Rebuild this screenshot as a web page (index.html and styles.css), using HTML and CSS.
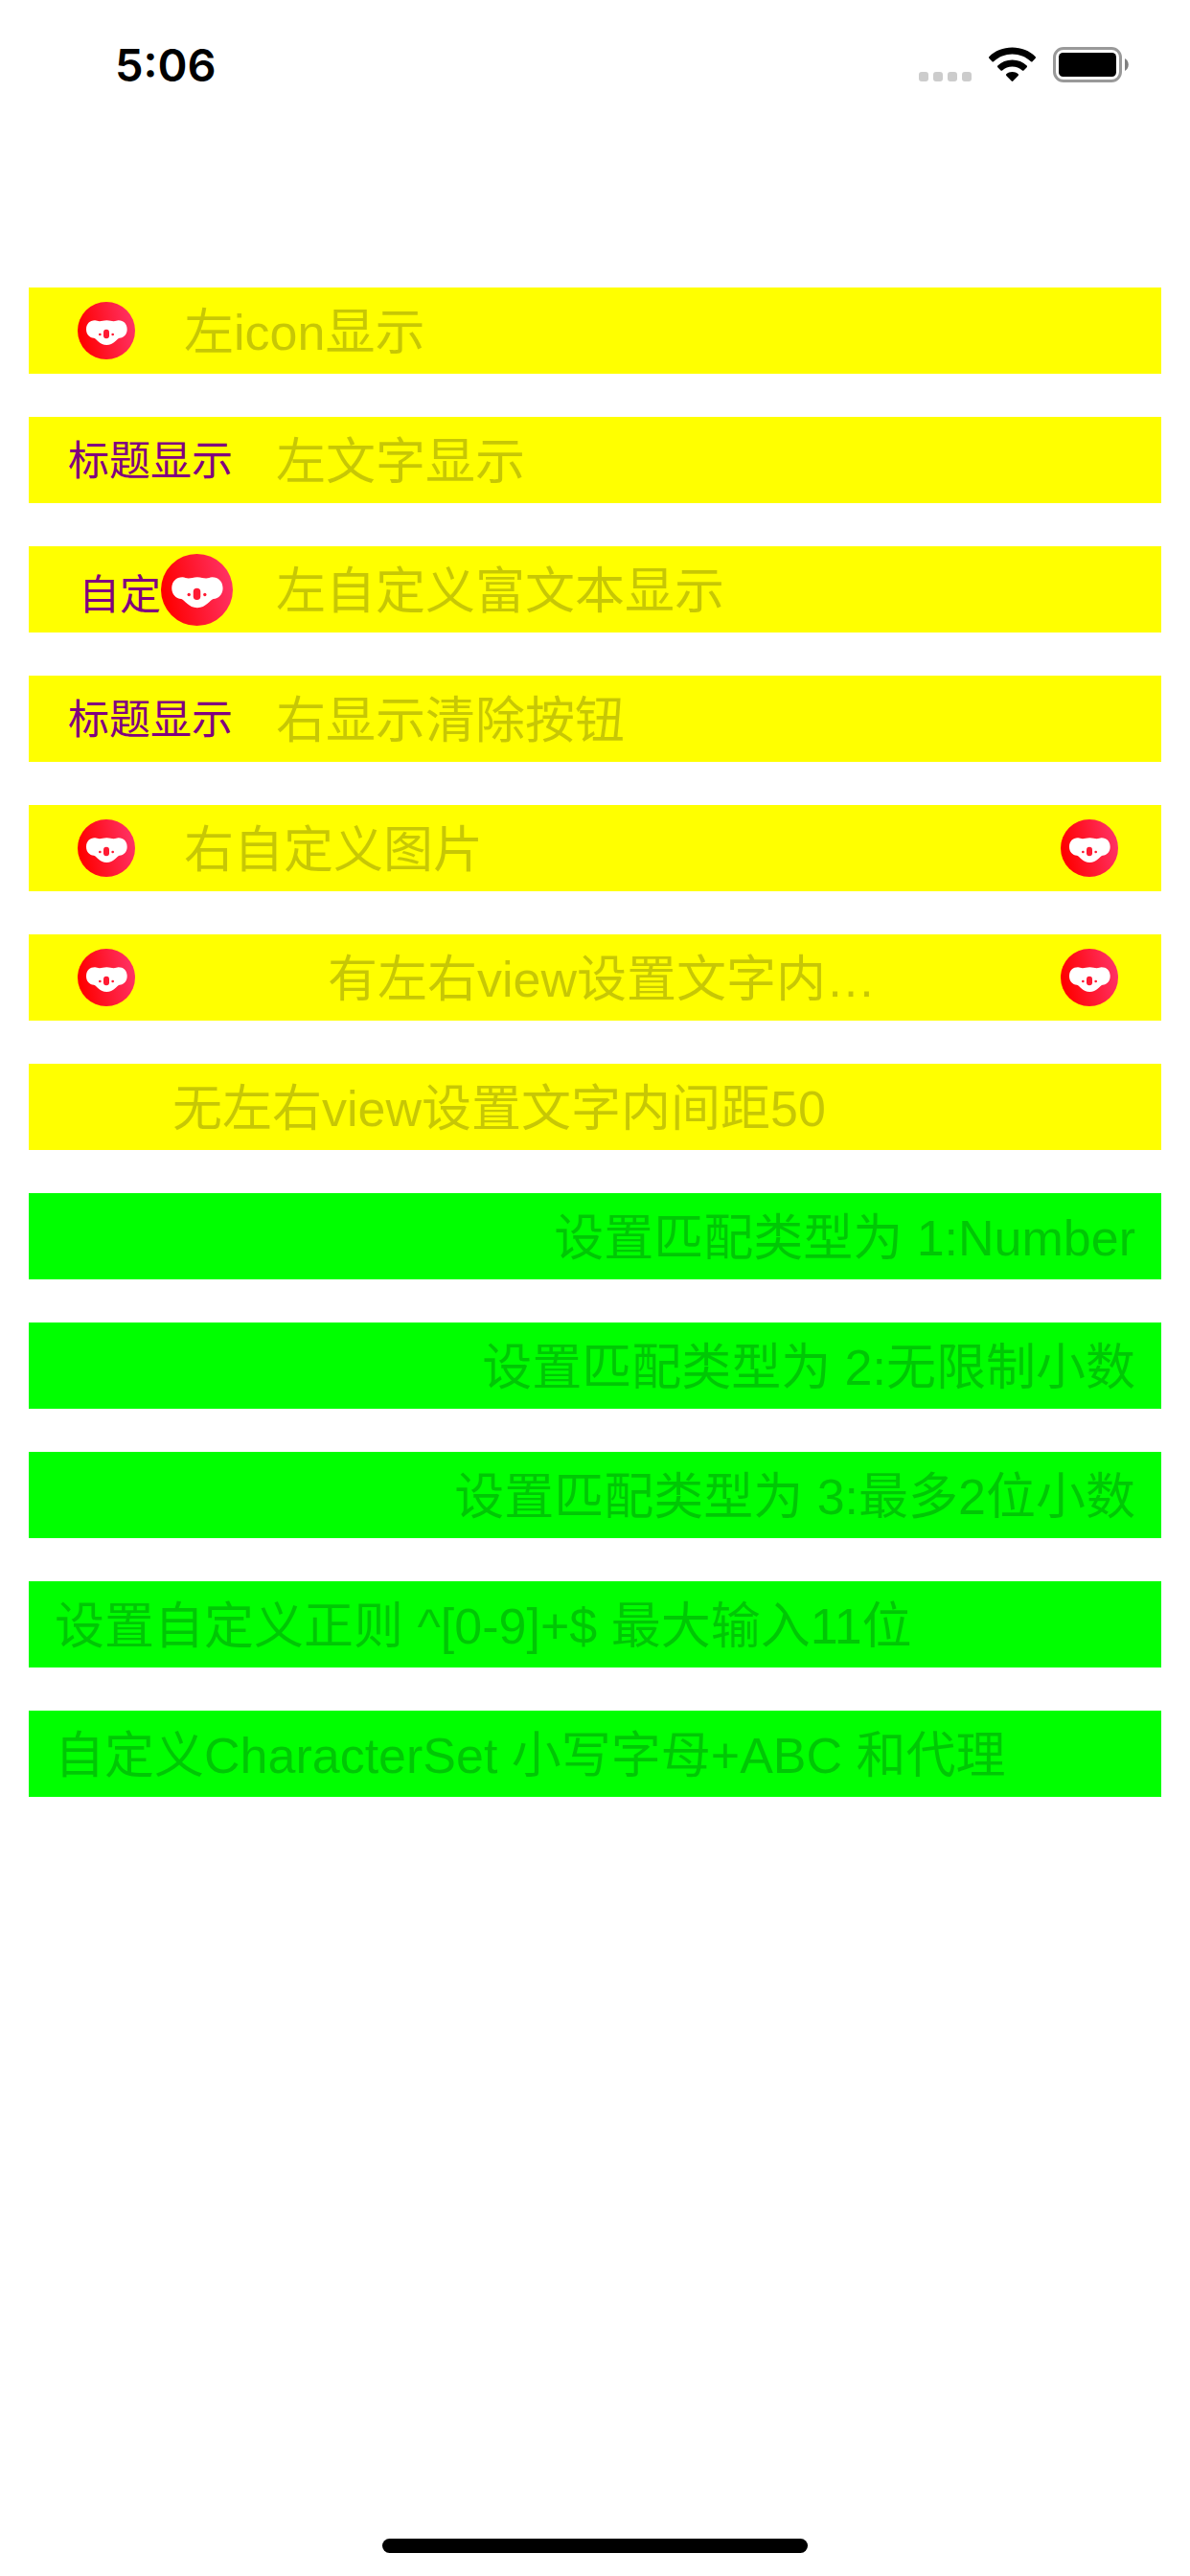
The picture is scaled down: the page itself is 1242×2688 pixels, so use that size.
FILE: index.html
```html
<!DOCTYPE html>
<html lang="zh-CN">
<head>
<meta charset="utf-8">
<meta name="viewport" content="width=device-width">
<title>TextField</title>
<link rel="stylesheet" href="styles.css">
</head>
<body>
<svg class="defs" width="0" height="0" aria-hidden="true">
  <defs>
    <linearGradient id="badge" x1="0" y1="0.6" x2="1" y2="0.4">
      <stop offset="0.05" stop-color="#ff0000"/>
      <stop offset="1" stop-color="#ff3366"/>
    </linearGradient>
    <symbol id="koala" viewBox="0 0 180 180">
      <circle cx="90" cy="90" r="90" fill="url(#badge)"/>
      <path fill="#fff" d="M27 86C27 69 38 58 54 58C60 58 63 61 69 61C76 61 81 58 91 58C101 58 106 61 113 61C119 61 122 58 128 58C144 58 155 69 155 86C155 101 145 112 131 113C122 116 113 135 91 135C69 135 60 116 51 113C37 112 27 101 27 86Z"/>
      <rect x="81" y="86" width="18" height="29" rx="9" fill="#ff1a33"/>
      <circle cx="70" cy="102" r="4" fill="#ff1a33"/>
      <circle cx="110" cy="102" r="4" fill="#ff1a33"/>
    </symbol>
  </defs>
</svg>
<div class="screen">
  <header class="status">
    <time class="clock">5:06</time>
    <div class="indicators">
      <div class="signal"><span></span><span></span><span></span><span></span></div>
      <svg class="wifi" viewBox="0 0 49 36" aria-hidden="true">
        <path d="M24.500 0C34 0 42.500 3.500 48.500 9.500Q49.500 10.500 48.500 11.500L45.500 14.700Q44.800 15.400 44 14.700C38.500 9.800 32 7 24.500 7S10.500 9.800 5 14.700Q4.200 15.400 3.500 14.700L.5 11.500Q-.5 10.500 .5 9.500C6.500 3.500 15 0 24.500 0Z"/>
        <path d="M24.500 13C30.500 13 35.700 15.300 39.700 19Q40.500 19.800 39.700 20.700L36.500 23.900Q35.700 24.700 34.900 24C32 21.400 28.500 20 24.500 20S17 21.400 14.100 24Q13.300 24.700 12.500 23.900L9.300 20.700Q8.500 19.800 9.300 19C13.300 15.300 18.500 13 24.500 13Z"/>
        <path d="M24.500 25.500C27 25.500 29 26.300 30.700 27.700Q31.500 28.500 30.700 29.400L25.300 35Q24.500 35.800 23.700 35L18.300 29.400Q17.500 28.500 18.300 27.700C20 26.300 22 25.500 24.500 25.500Z"/>
      </svg>
      <svg class="battery" viewBox="0 0 79 37" aria-hidden="true">
        <rect x="1.500" y="1.500" width="69" height="34" rx="9.500" fill="none" stroke="#999" stroke-width="3"/>
        <rect x="6" y="6" width="60" height="25" rx="4.500"/>
        <path d="M75 12C80 14.500 80 22.500 75 25Z" fill="#808080"/>
      </svg>
    </div>
  </header>

  <main class="fields">
    <div class="field icon-left">
      <svg class="icon"><use href="#koala"/></svg>
      <input type="text" aria-label="左icon显示" placeholder="左icon显示">
    </div>
    <div class="field text-left">
      <label for="title">标题显示</label>
      <input id="title" type="text" placeholder="左文字显示">
    </div>
    <div class="field text-left">
      <label class="rich" for="rich">自定<svg class="icon large"><use href="#koala"/></svg></label>
      <input id="rich" type="text" placeholder="左自定义富文本显示">
    </div>
    <div class="field text-left">
      <label for="clear">标题显示</label>
      <input id="clear" type="text" placeholder="右显示清除按钮">
    </div>
    <div class="field icon-left icon-right">
      <svg class="icon"><use href="#koala"/></svg>
      <input type="text" aria-label="右自定义图片" placeholder="右自定义图片">
      <svg class="icon"><use href="#koala"/></svg>
    </div>
    <div class="field icon-left icon-right spaced">
      <svg class="icon"><use href="#koala"/></svg>
      <input type="text" aria-label="有左右view设置文字内间距50" placeholder="有左右view设置文字内间距50">
      <svg class="icon"><use href="#koala"/></svg>
    </div>
    <div class="field inset">
      <input type="text" aria-label="无左右view设置文字内间距50" placeholder="无左右view设置文字内间距50">
    </div>
    <div class="field match end">
      <input type="text" aria-label="设置匹配类型为 1:Number" placeholder="设置匹配类型为 1:Number">
    </div>
    <div class="field match end">
      <input type="text" aria-label="设置匹配类型为 2:无限制小数" placeholder="设置匹配类型为 2:无限制小数">
    </div>
    <div class="field match end">
      <input type="text" aria-label="设置匹配类型为 3:最多2位小数" placeholder="设置匹配类型为 3:最多2位小数">
    </div>
    <div class="field match">
      <input type="text" aria-label="设置自定义正则" placeholder="设置自定义正则 ^[0-9]+$ 最大输入11位">
    </div>
    <div class="field match">
      <input type="text" aria-label="自定义CharacterSet" placeholder="自定义CharacterSet 小写字母+ABC 和代理">
    </div>
  </main>
  <div class="home"></div>
</div>
</body>
</html>
```
FILE: styles.css
```css
* {
  box-sizing: border-box;
}

body {
  margin: 0;
  background: #fff;
  font-family: "Liberation Sans", "Noto Sans CJK SC", sans-serif;
}

.defs {
  position: absolute;
}

.screen {
  display: flex;
  flex-direction: column;
  min-height: 100vh;
}

/* Status bar */
.status {
  display: flex;
  justify-content: space-between;
  align-items: center;
  height: 135px;
  padding: 0 64px 0 120px;
}

.clock {
  font: 600 47px/60px Inter, sans-serif;
}

.indicators {
  display: flex;
  align-items: flex-end;
  gap: 18px;
}

.signal {
  display: flex;
  gap: 5px;
  padding-bottom: 1px;
}

.signal span {
  width: 10px;
  height: 10px;
  border-radius: 3px;
  background: #ccc;
}

.wifi {
  width: 49px;
  height: 37px;
}

.battery {
  width: 79px;
  height: 37px;
}

/* Fields */
.fields {
  display: flex;
  flex-direction: column;
  gap: 45px;
  padding: 165px 30px 0;
}

.field {
  display: flex;
  align-items: center;
  height: 90px;
  padding: 0 27px;
  background: #ff0;
}

.field input {
  flex: 1;
  min-width: 0;
  height: 90px;
  padding: 3px 0 0;
  border: 0;
  outline: 0;
  background: none;
  font: inherit;
  font-size: 52px;
  text-overflow: ellipsis;
}

.field input::placeholder {
  color: rgba(0, 0, 25, 0.22);
  opacity: 1;
}

.icon {
  flex: none;
  width: 60px;
  height: 60px;
}

.icon.large {
  width: 75px;
  height: 75px;
}

.icon-left {
  padding-left: 51px;
  gap: 51px;
}

.icon-right {
  padding-right: 45px;
}

.text-left {
  padding-left: 41px;
  gap: 45px;
}

.field label {
  flex: none;
  width: 172px;
  padding-top: 2px;
  color: #800080;
  font-size: 43px;
  line-height: 60px;
}

.field .rich {
  display: flex;
  justify-content: flex-end;
  align-items: flex-end;
  padding: 0;
  line-height: 64px;
}

.spaced input {
  margin: 0 99px 0 150px;
}

.inset {
  padding-left: 150px;
}

.match {
  background: #0f0;
}

.end input {
  text-align: right;
}

.home {
  width: 444px;
  height: 15px;
  margin: auto auto 24px;
  border-radius: 8px;
  background: #000;
}
```
